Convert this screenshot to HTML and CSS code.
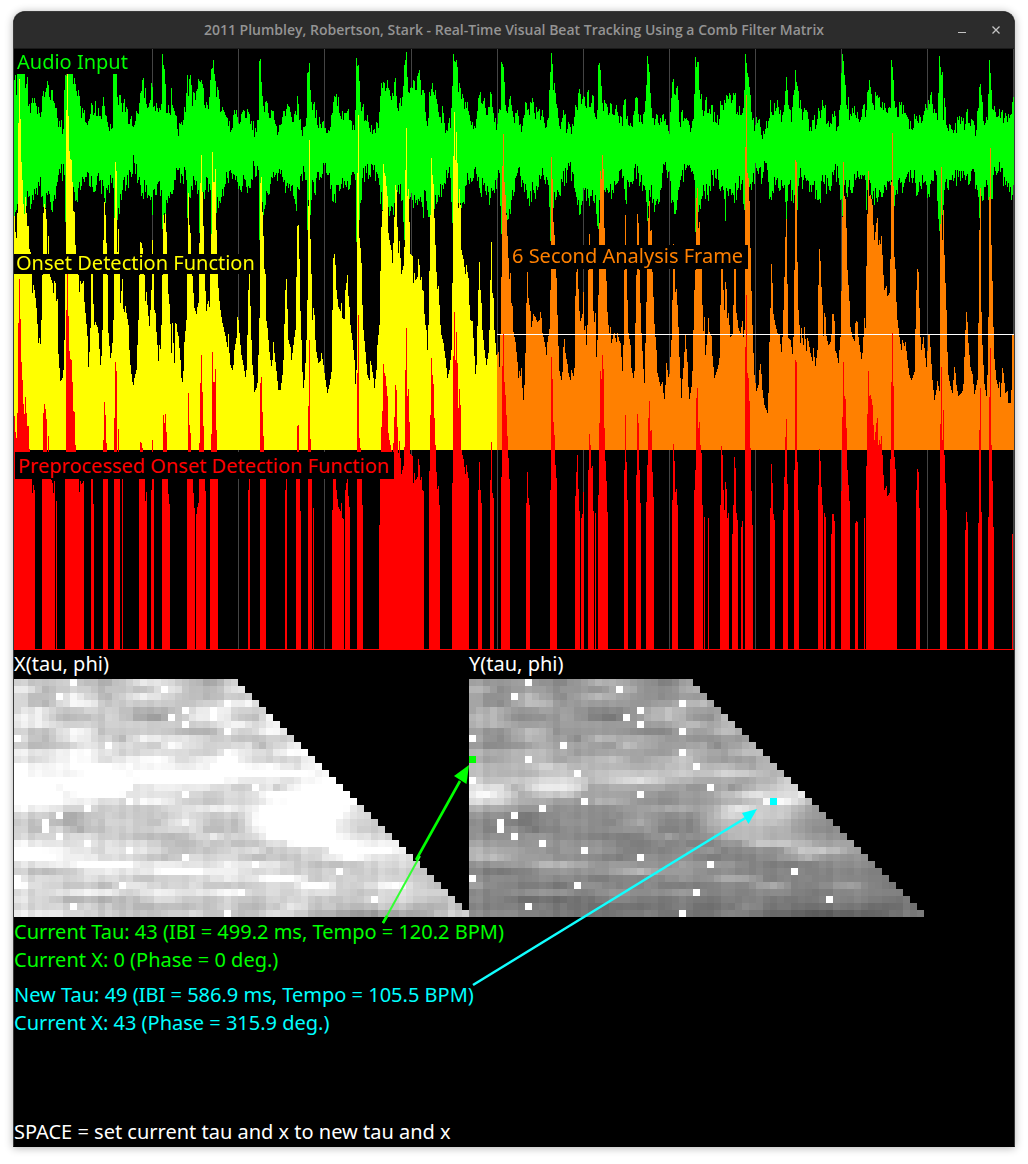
FILE: index.html
```html
<!DOCTYPE html>
<html lang="en">
<head>
<meta charset="utf-8">
<meta name="viewport" content="width=device-width, initial-scale=1">
<title>Real-Time Visual Beat Tracking Using a Comb Filter Matrix</title>
<link rel="stylesheet" href="styles.css">
</head>
<body>
<main class="window">
  <header class="titlebar">
    <h1 class="title">2011 Plumbley, Robertson, Stark - Real-Time Visual Beat Tracking Using a Comb Filter Matrix</h1>
    <div class="controls">
      <button class="control" type="button" aria-label="Minimize"><svg width="12" height="12" viewBox="0 0 12 12"><path d="M2 8.5h8" stroke="currentColor"/></svg></button>
      <button class="control" type="button" aria-label="Close"><svg width="12" height="12" viewBox="0 0 12 12"><path d="M2.5 2.5l7 7M9.5 2.5l-7 7" stroke="currentColor" stroke-width="1.3"/></svg></button>
    </div>
  </header>
  <section class="signals">
    <canvas class="plot" id="signals" width="1000" height="601"></canvas>
    <p class="tag tag-audio">Audio Input</p>
    <p class="tag tag-onset">Onset Detection Function</p>
    <p class="tag tag-frame">6 Second Analysis Frame</p>
    <p class="tag tag-pre">Preprocessed Onset Detection Function</p>
  </section>
  <section class="analysis">
    <div class="matrices">
      <figure class="matrix">
        <figcaption class="caption">X(tau, phi)</figcaption>
        <canvas class="plot" id="matrix-x" width="455" height="238"></canvas>
      </figure>
      <figure class="matrix">
        <figcaption class="caption">Y(tau, phi)</figcaption>
        <canvas class="plot" id="matrix-y" width="545" height="238"></canvas>
      </figure>
    </div>
    <div class="readouts">
      <div class="readout current">
        <p>Current Tau: 43 (IBI = 499.2 ms, Tempo = 120.2 BPM)</p>
        <p>Current X: 0 (Phase = 0 deg.)</p>
      </div>
      <div class="readout new">
        <p>New Tau: 49 (IBI = 586.9 ms, Tempo = 105.5 BPM)</p>
        <p>Current X: 43 (Phase = 315.9 deg.)</p>
      </div>
      <p class="hint">SPACE = set current tau and x to new tau and x</p>
    </div>
    <svg class="arrows" viewBox="0 0 1000 400" aria-hidden="true">
      <path d="M369 273L406 206" stroke="#3f3" stroke-width="2"/>
      <path d="M369 273l4-7M402 210L446 131" stroke="#0f0" stroke-width="2.6"/>
      <path d="M455 115L452.500 134L440 126Z" fill="#0f0"/>
      <path d="M459 335L733 167" stroke="#1ff" stroke-width="2.6"/>
      <path d="M743 159L734.500 174L728 163Z" fill="#0ff"/>
    </svg>
  </section>
</main>
<script src="plots.js"></script>
</body>
</html>
```

FILE: styles.css
```css
* { box-sizing: border-box; }

body {
  margin: 0;
  padding: 11px 13px 16px;
  background: #fff;
  color: #fff;
  font-family: "Noto Sans", "Open Sans", sans-serif;
  font-size: 20px;
  line-height: 28px;
}

p, h1, figure { margin: 0; }

.window {
  border: 1px solid #3a3a3a;
  border-bottom-color: #000;
  border-radius: 12px 12px 0 0;
  background: #000;
  box-shadow: 0 1px 8px rgba(0, 0, 0, 0.3);
}

.titlebar {
  position: relative;
  display: flex;
  align-items: center;
  justify-content: center;
  height: 37px;
  border-bottom: 1px solid #1a1a1a;
  border-radius: 11px 11px 0 0;
  background: #2c2c2c;
  color: #949494;
}

.title {
  font-family: "Open Sans", "Noto Sans", sans-serif;
  font-size: 14px;
  font-weight: 600;
  line-height: 20px;
  white-space: nowrap;
}

.controls {
  position: absolute;
  right: 6px;
  display: flex;
  gap: 10px;
}

.control {
  display: flex;
  align-items: center;
  justify-content: center;
  width: 24px;
  height: 24px;
  padding: 0;
  border: 0;
  background: none;
  color: #c4c4c4;
}

.signals { position: relative; }

.plot {
  display: block;
  width: 100%;
  image-rendering: pixelated;
}

.tag {
  position: absolute;
  background: #000;
  white-space: nowrap;
}

.tag-audio { left: 0; top: 0; padding: 0 2px 0 3px; line-height: 25px; color: #0f0; }
.tag-onset { left: 0; top: 205px; padding: 0 0 2px 2px; line-height: 18px; color: #ff0; }
.tag-frame { left: 495px; top: 196px; padding: 0 5px 2px 3px; line-height: 22px; color: #ff8000; }
.tag-pre { left: 1px; top: 403px; padding: 0 5px 0 3px; line-height: 27px; color: #f00; }

.analysis { position: relative; }

.matrices {
  display: grid;
  grid-template-columns: 455fr 545fr;
}

.matrix { min-width: 0; }
.caption { height: 29px; }

.readouts {
  display: flex;
  flex-direction: column;
  gap: 7px;
  padding-top: 1px;
}

.current { color: #0f0; }
.new { color: #0ff; }
.hint { padding-top: 74px; }

.arrows {
  position: absolute;
  left: 0;
  top: 0;
  width: 100%;
}
```

FILE: plots.js
```js
// Signal samples are "column:row" pairs in window pixels; columns between two pairs are interpolated.
const LEFT = 14, TOP = 49, COLS = 1000;

const ONSET = `14:216 15:232 16:238 17:213 18:123 19:79 20:119 21:162 22:180 23:204 24:214 25:197 26:213 27:226 28:226 29:249 30:252 31:270 32:293 33:285 34:290 35:298 36:308 37:324 38:343 39:338 40:344 41:320 42:275 43:213 44:204 45:209 46:219 47:254 48:236 49:254 50:277 52:283 53:293 54:281 55:283 56:301 57:299 58:354 60:381 62:378 63:370 64:340 65:270 66:110 67:74 68:116 69:151 70:159 71:160 72:182 73:211 74:212 75:245 76:254 78:275 79:292 80:281 81:284 83:281 84:302 86:324 87:336 88:367 89:352 90:328 91:274 92:274 93:304 94:325 95:322 97:327 98:333 100:365 101:356 102:330 103:240 104:202 105:215 106:243 107:275 108:333 110:358 111:353 112:343 113:320 114:218 115:162 116:171 117:252 118:229 119:254 120:303 122:279 123:309 124:312 125:306 126:313 128:325 129:350 130:365 132:382 133:385 134:378 136:370 138:320 139:275 140:242 141:243 142:248 144:275 145:301 146:292 147:305 149:326 150:310 151:290 152:240 153:272 154:310 155:313 156:332 157:345 158:361 159:345 160:349 161:325 162:275 163:215 164:223 165:214 166:232 167:262 168:294 169:304 170:324 171:353 172:323 174:363 175:323 176:324 177:332 178:336 180:360 181:378 182:382 183:371 184:342 186:320 187:260 188:193 189:225 190:233 191:258 193:293 194:308 196:314 197:307 198:303 199:243 200:183 201:155 202:192 203:226 204:255 205:291 206:311 207:304 208:301 209:307 210:270 211:234 212:152 213:182 214:182 215:169 216:230 217:260 218:288 219:301 220:310 222:323 225:336 227:347 228:334 229:353 230:365 232:370 233:365 234:350 236:338 237:317 238:320 240:345 241:355 243:365 245:377 246:370 247:335 248:290 249:270 250:306 251:340 252:365 253:375 254:392 256:388 257:383 258:355 259:318 260:183 261:177 262:212 263:236 264:269 265:274 266:321 267:328 269:352 270:360 271:366 272:360 273:342 274:353 276:371 278:390 280:390 282:375 283:360 284:324 285:290 286:279 287:309 288:340 290:347 291:360 293:345 294:337 295:330 296:277 297:226 298:225 299:259 300:311 301:340 302:372 303:388 304:380 305:363 306:340 307:300 308:206 309:140 310:239 311:274 312:320 313:308 314:315 315:340 316:352 318:363 320:361 321:353 323:365 325:380 327:393 329:385 331:372 332:310 333:258 334:254 335:265 336:290 338:307 340:311 341:303 342:318 344:319 345:290 346:283 347:275 348:296 349:307 350:325 352:340 354:360 355:384 356:370 357:173 358:115 359:238 360:248 361:263 362:305 363:330 365:352 367:375 369:380 370:361 371:365 373:378 374:388 376:370 377:345 378:335 379:325 380:271 381:227 382:211 383:164 384:173 385:176 386:186 387:196 388:233 389:240 391:250 392:263 393:243 394:217 395:185 396:190 397:227 398:253 399:241 400:258 401:274 403:266 404:247 405:170 406:128 407:196 408:189 409:222 410:254 412:256 413:283 414:273 415:280 417:277 418:259 419:265 420:280 421:277 422:290 423:291 424:314 425:325 426:330 427:350 428:325 429:271 430:215 431:158 432:175 433:184 434:218 435:245 436:272 437:289 438:286 439:305 440:325 441:335 443:343 445:358 447:378 449:370 451:350 452:283 453:156 454:112 455:160 456:132 457:163 458:208 459:189 460:205 461:250 463:259 465:274 466:265 467:272 468:278 469:305 470:320 472:321 473:338 475:374 476:365 477:326 478:290 479:262 480:290 481:303 482:330 484:350 486:365 488:353 489:330 490:280 491:242 492:293 493:298 494:330 496:355 498:352 499:367 500:335 501:277 502:166 503:134 504:182 505:195 506:215 507:236 508:258 509:279 510:273 511:303 512:306 513:332 515:342 517:362 518:378 519:371 520:376 521:368 522:388 523:400 524:385 525:353 526:303 527:272 528:298 530:311 531:327 533:314 535:317 537:322 539:320 540:312 541:318 542:333 543:337 545:347 546:355 547:342 549:329 550:290 551:157 552:179 553:222 554:235 555:265 556:278 557:315 558:346 559:371 561:380 562:372 563:347 564:339 565:353 567:364 568:373 570:380 571:370 573:376 574:368 575:296 576:272 577:255 578:289 579:311 580:321 582:314 583:292 584:330 585:326 586:345 587:325 588:270 589:234 590:245 591:268 592:266 593:311 594:322 595:313 596:357 597:340 598:295 599:223 600:171 601:179 602:155 603:169 604:228 605:261 606:281 607:312 608:325 609:333 610:327 611:343 613:335 614:333 616:342 617:333 619:341 620:343 622:371 623:345 624:270 625:215 626:262 627:300 628:333 630:345 631:368 633:378 634:371 636:275 637:214 638:223 639:270 640:303 641:333 643:369 644:383 645:343 646:302 647:265 648:218 649:201 650:231 651:230 652:272 653:297 654:324 656:350 657:373 660:386 662:382 663:393 664:399 665:385 666:363 668:377 669:374 671:340 672:300 673:244 674:261 675:292 676:289 677:305 678:327 679:357 681:398 682:379 683:368 685:335 687:362 688:387 689:399 691:387 692:371 693:330 694:290 695:270 696:198 697:188 698:228 699:222 700:245 701:253 702:305 703:331 704:317 705:355 707:335 708:318 709:332 711:336 712:356 714:378 716:372 718:365 719:358 720:305 721:246 722:255 723:290 724:310 725:282 726:289 727:318 728:313 730:337 732:334 733:305 734:257 735:268 736:313 737:320 738:328 740:333 741:327 742:321 743:337 744:330 745:147 746:95 747:173 748:178 749:201 750:248 751:291 752:325 753:353 754:375 756:391 758:385 759:370 760:364 761:374 762:390 764:405 766:410 767:413 768:393 769:342 770:308 771:264 772:283 773:314 775:325 777:333 779:335 781:352 782:337 783:310 784:277 785:237 786:219 787:284 788:338 790:340 792:354 793:337 794:270 795:160 796:162 797:262 798:310 799:325 800:343 801:328 802:338 803:345 804:327 806:351 807:338 808:341 810:353 812:361 813:348 815:366 817:350 818:285 819:249 820:261 821:287 822:305 823:336 824:313 825:317 826:336 828:345 830:342 831:334 832:314 833:314 834:321 835:351 836:353 838:363 840:337 841:291 842:217 843:162 844:196 845:199 846:228 847:270 848:285 849:301 850:327 852:337 854:341 855:323 856:321 857:322 858:337 860:352 861:359 862:353 863:337 864:318 865:328 866:266 867:214 868:171 869:196 870:195 871:199 872:205 873:225 874:240 876:223 877:218 878:245 879:240 880:244 881:236 882:255 883:275 884:290 885:288 886:286 887:296 889:293 890:259 891:182 892:133 893:186 894:257 895:269 896:302 897:320 898:328 899:337 901:350 902:340 904:346 905:342 907:360 909:375 911:380 913:375 914:372 915:329 916:290 917:269 918:272 919:308 920:337 921:350 923:337 925:358 926:367 928:334 929:335 930:347 932:380 934:400 936:390 937:381 939:391 940:224 941:167 942:240 943:210 944:255 945:283 946:310 947:352 948:375 950:386 952:393 954:367 955:373 956:385 958:396 960:394 962:391 963:384 965:330 966:312 967:322 968:343 970:367 972:374 974:394 976:385 977:380 978:323 979:230 980:188 981:312 982:345 984:384 986:396 987:375 988:317 989:197 990:148 991:245 992:281 993:327 994:359 996:380 998:388 999:382 1000:397 1002:368 1003:373 1005:393 1007:391 1008:403 1010:403 1011:390 1012:334 1013:334`;

const AUDIO_HIGH = `14:80 15:75 16:95 17:70 19:60 24:74 25:88 26:84 27:77 28:106 31:103 32:98 33:103 34:98 36:106 38:107 39:113 40:117 41:112 42:96 43:91 44:97 45:92 46:88 47:81 48:85 49:97 50:100 51:90 52:90 53:101 55:108 56:108 57:118 58:127 60:127 63:129 64:90 65:75 72:70 73:84 75:84 76:91 77:96 79:96 80:106 81:118 83:113 85:122 87:125 89:119 90:114 92:105 93:115 95:101 97:116 100:116 102:106 103:97 105:115 107:122 110:124 112:128 113:72 116:74 118:105 119:95 121:103 123:103 125:112 127:109 129:124 131:116 133:127 135:121 137:113 139:103 140:93 142:80 143:78 144:98 145:88 147:108 149:103 151:83 153:107 156:103 158:112 160:110 161:104 162:54 163:65 165:84 166:113 168:105 170:115 171:88 173:108 175:115 177:129 180:124 183:120 185:112 186:93 187:75 188:96 190:75 192:106 194:93 195:100 197:89 199:81 201:80 203:88 205:108 207:105 209:97 210:80 212:68 213:60 214:74 216:97 218:90 220:112 223:110 226:117 229:121 231:130 234:110 237:117 239:124 241:114 243:110 245:118 247:109 249:114 252:130 255:128 258:120 259:61 260:59 261:82 263:106 266:101 268:113 270:118 272:111 275:124 278:132 281:124 284:111 288:106 290:112 292:122 294:114 296:115 297:96 299:120 301:130 304:127 306:118 307:73 309:63 310:90 312:110 314:102 317:125 319:117 322:122 325:128 328:130 331:115 333:102 335:97 338:97 340:116 344:113 347:111 350:120 354:130 355:110 356:58 358:65 360:102 362:107 365:120 368:122 371:125 374:129 376:122 378:128 380:96 382:88 384:83 386:88 387:80 389:90 391:100 393:96 395:78 397:108 399:103 401:106 403:86 404:65 406:52 407:77 409:93 411:87 413:80 415:90 417:76 419:70 421:95 423:90 425:112 427:126 429:92 431:89 433:92 435:90 437:104 440:117 443:113 446:130 448:123 450:128 452:86 453:54 455:62 457:67 458:92 460:88 463:98 466:108 469:115 472:122 475:128 478:98 480:92 482:104 484:98 487:115 490:92 492:107 495:118 497:124 499:109 500:110 501:62 503:67 505:105 508:107 510:96 511:105 513:117 516:113 519:125 522:126 525:102 528:109 531:103 534:113 536:107 540:120 543:117 546:127 548:118 549:90 551:53 552:64 553:90 555:93 558:118 561:122 564:115 567:129 570:127 573:126 575:105 577:110 579:89 581:104 583:96 585:106 588:90 590:107 593:96 595:117 597:110 598:65 600:70 602:103 605:103 608:115 611:104 614:115 616:105 619:123 622:126 624:100 627:116 630:123 633:115 636:97 638:114 641:122 644:112 646:85 647:56 649:72 651:108 653:118 656:114 660:118 664:121 667:125 669:134 671:98 673:79 675:95 677:86 679:122 682:110 684:118 687:120 690:132 693:119 695:57 698:62 699:90 701:94 703:116 705:100 708:113 711:105 715:122 718:125 720:101 723:110 726:95 729:93 731:103 734:95 737:112 740:115 743:108 744:90 745:54 747:73 750:95 752:120 755:125 758:120 760:127 764:134 767:128 770:100 772:115 776:108 778:107 781:122 784:105 786:77 788:105 791:122 793:95 795:70 797:86 799:108 803:112 806:110 810:127 813:120 816:125 818:108 821:110 824:108 827:123 830:123 833:117 837:127 840:105 842:54 844:75 846:105 848:97 849:120 852:108 856:118 860:120 863:105 866:110 868:90 870:87 873:105 877:95 880:107 883:110 887:113 890:108 891:60 893:80 895:108 898:117 900:105 904:113 908:119 912:130 916:116 919:115 923:115 926:108 928:100 931:92 933:113 937:120 939:56 941:75 942:72 943:120 944:98 946:125 950:125 954:130 958:120 962:121 965:124 966:112 970:126 974:125 976:130 978:108 980:84 982:102 984:125 987:120 989:60 991:90 993:110 996:117 1000:118 1004:118 1007:122 1010:115 1012:102 1013:101`;

const AUDIO_LOW = `14:216 16:210 20:190 24:215 28:197 33:200 36:188 40:177 43:207 47:195 51:210 54:195 57:182 60:173 64:175 65:222 66:200 70:195 76:200 80:190 84:182 88:173 92:187 96:185 100:180 104:198 108:185 112:178 114:218 118:208 122:190 126:185 130:172 134:163 138:180 142:193 146:185 150:200 152:215 153:190 158:182 161:190 162:229 165:215 166:200 170:192 174:180 178:170 182:176 186:180 187:218 190:198 194:180 198:190 199:233 200:208 207:178 210:190 211:235 212:190 218:208 221:197 225:184 230:170 235:180 240:190 245:180 250:188 254:166 258:170 259:240 260:190 264:209 268:195 272:178 278:173 283:182 288:188 292:185 295:204 299:190 303:166 306:180 307:230 308:200 310:215 312:180 315:195 318:172 324:165 329:173 333:202 337:185 342:178 348:190 352:172 355:180 356:242 357:190 359:220 362:178 366:173 372:165 378:178 382:210 388:207 393:215 398:185 402:200 404:240 405:200 412:200 416:200 420:197 423:218 424:190 430:215 434:209 438:195 442:185 446:170 450:178 452:223 453:200 461:208 466:185 470:178 475:167 480:193 484:183 490:198 495:180 499:173 501:234 502:200 505:200 508:219 512:190 517:173 522:180 528:198 533:190 538:187 543:175 548:185 550:241 551:215 557:190 562:182 567:170 572:172 577:205 580:214 584:190 590:196 595:195 598:229 599:200 607:190 612:190 617:183 622:178 625:200 628:182 634:168 640:182 645:190 647:221 649:190 655:205 660:190 664:165 668:172 672:200 676:210 680:180 685:170 690:168 694:180 695:232 699:205 703:185 707:195 712:175 718:180 723:190 725:221 726:188 733:195 738:188 742:180 744:210 748:190 752:182 756:168 762:178 766:163 770:197 775:185 780:190 784:185 786:220 788:185 794:195 797:210 799:178 807:180 812:185 818:200 823:182 829:190 834:170 838:178 842:216 844:185 850:190 855:180 860:175 865:180 866:210 868:190 876:198 882:197 886:190 891:180 894:206 896:190 903:187 908:172 913:178 918:192 922:175 927:198 931:180 936:175 939:231 942:215 944:190 952:175 958:177 964:175 968:185 974:172 977:190 979:218 980:195 987:185 990:215 993:175 1000:172 1005:185 1012:195 1013:190`;

// Column ranges in which the onset function rises above its adaptive threshold.
const PEAKS = `14-35 42-55 56-57 65-84 91-94 103-108 114-120 122-123 139-147 151-154 162-170 187-195 196-206 210-218 248-250 260-266 285-287 296-301 308-312 313-314 332-344 345-350 357-363 379-424 429-440 452-469 478-482 490-494 501-510 526-530 550-557 575-580 581-584 588-594 595-596 598-608 624-628 636-641 646-654 672-678 694-703 704-705 708-709 720-729 732-738 741-743 745-753 770-775 783-788 794-799 818-823 824-826 831-835 841-850 855-858 864-865 866-897 916-920 940-947 965-968 978-982 988-994 1012-1013`;

// One line per tau: "phi:gray" pairs of the Y matrix.
const ROWS = `0:160 4:150 7:160 10:145 13:135 16:160 18:180 21:170 24:150 28:130 31:160
0:180 2:170 4:140 6:155 8:165 12:140 15:150 18:150 21:175 23:170 25:145 29:150 32:180
0:165 3:145 5:150 8:190 10:165 13:140 16:170 18:185 21:165 24:150 28:145 33:160
0:165 4:140 8:190 10:185 13:150 17:155 21:155 24:150 27:160 30:175 33:190 34:175
0:165 3:185 6:155 9:155 13:160 17:135 21:135 23:150 26:180 28:195 31:165 35:160
0:180 3:185 6:145 10:145 14:160 17:130 20:120 22:140 25:175 28:195 31:160 34:145 36:180
0:175 3:185 6:165 9:160 12:150 16:160 20:155 23:155 26:160 30:180 32:185 34:165 37:180
0:160 4:145 8:190 10:180 12:145 16:155 20:155 24:140 27:135 30:165 33:160 36:190 38:175
0:170 4:140 6:165 8:185 11:165 14:150 15:140 18:185 21:170 24:175 27:160 31:150 35:150 39:155
0:155 3:140 6:150 9:170 13:165 17:160 20:155 22:190 26:165 30:160 33:170 35:140 40:180
0:180 4:170 8:190 11:180 15:155 19:165 24:165 27:155 31:185 36:160 39:190 41:185
0:170 3:165 6:180 8:190 13:165 17:180 20:195 23:165 27:180 30:200 33:170 36:155 40:160 42:180
0:190 4:180 8:190 11:210 14:185 17:180 20:185 24:175 28:190 31:190 35:185 40:165 43:190
0:190 5:180 9:185 12:200 16:185 20:200 25:200 29:200 33:195 37:210 41:190 44:180
0:205 3:195 8:205 12:220 15:210 17:185 20:205 24:225 27:200 30:180 34:170 39:165 42:180 45:205
0:225 4:225 6:180 9:225 12:235 15:220 17:165 22:175 27:170 31:150 34:155 36:170 37:150 40:180 43:200 46:215
0:235 2:250 5:215 7:175 10:200 14:200 16:165 20:165 25:155 29:150 33:160 37:190 40:225 43:215 46:220 47:235
0:220 4:215 6:185 9:170 13:160 16:150 18:180 21:170 24:150 29:145 34:160 38:180 41:200 42:250 44:250 46:225 48:195
0:175 4:170 8:150 13:145 17:140 20:145 24:160 28:170 32:160 35:185 38:230 41:205 45:200 47:180 49:160
0:150 4:145 8:120 12:140 17:140 21:140 24:160 27:145 31:140 34:175 37:215 40:200 44:205 47:170 50:155
0:140 4:135 8:120 10:135 15:145 20:135 24:170 27:140 31:130 34:175 38:190 43:195 47:160 51:145
0:145 3:130 6:150 9:120 13:140 19:140 23:150 25:155 28:130 31:130 34:165 38:185 44:180 48:150 52:140
0:145 4:145 8:150 13:140 17:130 22:125 25:140 28:160 30:140 34:150 38:185 42:180 46:170 50:155 53:140
0:165 5:155 10:150 15:145 18:150 21:130 24:125 27:140 31:130 35:140 38:150 41:200 44:200 48:180 51:160 54:165
0:180 3:175 7:160 11:145 15:150 18:155 22:130 26:135 30:140 34:150 36:130 40:140 44:150 47:200 50:200 53:175 55:155
0:180 3:190 6:165 10:155 13:145 17:140 21:125 25:145 30:145 35:125 40:130 45:155 48:180 51:150 56:145
0:145 5:155 8:160 11:185 14:175 18:150 22:155 26:150 31:155 36:150 40:130 45:125 50:140 57:140
0:135 4:120 7:130 12:150 15:145 19:150 24:185 26:165 30:155 35:140 40:130 45:135 50:135 58:130
0:140 4:140 8:135 13:140 18:125 23:135 28:145 33:145 37:170 39:165 42:130 48:135 55:135 59:130
0:160 3:140 8:125 13:120 17:145 21:130 25:140 30:125 34:130 39:135 43:170 46:130 50:140 54:160 56:140 60:125
0:135 4:135 8:145 12:145 16:130 20:150 24:140 30:155 34:130 39:130 43:140 48:125 54:135 61:135
0:140 4:130 8:110 13:110 17:115 20:135 26:125 31:125 35:120 40:130 45:120 50:130 56:130 62:120
0:130 5:130 9:125 14:115 18:110 23:115 29:125 34:110 37:120 39:140 42:120 47:115 53:120 58:110 63:120
0:140 5:140 10:125 15:115 20:115 25:130 30:115 33:115 38:130 43:105 50:95 57:100 60:115 64:130`;

// Candidate phase for each tau.
const CANDIDATES = [8, 21, 6, 30, 24, 22, 24, 30, 0, 13, 30, 8, 32, 15, 0, 34, 24, 16, 10, 6, 4, 4, 6, 10, 16, 24, 34, 46, 0, 15, 32, 51, 8, 30];

function noise(x) {
  const n = Math.sin(x * 12.9898) * 43758.5453;
  return (n - Math.floor(n)) * 2 - 1;
}

function expand(text, from, count, jitter) {
  const pts = text.split(" ").map(p => p.split(":").map(Number));
  const out = [];
  let k = 0;
  for (let i = 0; i < count; i++) {
    const x = from + i;
    while (k < pts.length - 2 && pts[k + 1][0] <= x) k++;
    const [x0, y0] = pts[k], [x1, y1] = pts[k + 1];
    let y = y0 + (y1 - y0) * (x - x0) / (x1 - x0);
    if (x !== x0) y += noise(x) * jitter;
    out.push(Math.round(y));
  }
  return out;
}

function drawSignals() {
  const g = document.getElementById("signals").getContext("2d");
  const bar = (i, y0, y1, color) => {
    g.fillStyle = color;
    g.fillRect(i, y0 - TOP, 1, y1 - y0);
  };
  g.fillStyle = "#000";
  g.fillRect(0, 0, COLS, 601);
  for (const x of [66, 152, 238, 324, 411, 497, 583, 669, 755, 841, 927, 1013]) bar(x - LEFT, 49, 650, "#444");

  const onset = expand(ONSET, LEFT, COLS, 0);
  const high = expand(AUDIO_HIGH, LEFT, COLS, 9);
  const low = expand(AUDIO_LOW, LEFT, COLS, 11);
  for (let i = 0; i < COLS; i++) {
    bar(i, high[i], low[i], "#0f0");
    bar(i, onset[i], 450, i + LEFT < 497 ? "#ff0" : "#ff8000");
  }
  g.fillStyle = "#fff";
  g.fillRect(497 - LEFT, 334 - TOP, COLS, 1);
  for (const range of PEAKS.split(" ")) {
    const [a, b] = range.split("-").map(Number);
    for (let x = a; x < b; x++) bar(x - LEFT, onset[x - LEFT] + 200, 650, "#f00");
  }
  g.fillStyle = "#f00";
  g.fillRect(0, 600, COLS, 1);
}

function drawMatrix(id, gain, markers) {
  const g = document.getElementById(id).getContext("2d");
  const cell = (c, r, color) => {
    g.fillStyle = color;
    g.fillRect(c * 7, r * 7, 7, 7);
  };
  ROWS.split("\n").forEach((line, r) => {
    const values = expand(line, 0, 32 + r, 7);
    values.forEach((v, c) => {
      const n = Math.min(255, Math.round(v * gain(r)));
      cell(c, r, `rgb(${n},${n},${n})`);
    });
    cell(CANDIDATES[r], r, "#fff");
  });
  for (const [c, r, color] of markers) cell(c, r, color);
}

drawSignals();
drawMatrix("matrix-x", r => 1.3 + 0.38 * (r / 33) ** 2, []);
drawMatrix("matrix-y", () => 1, [[0, 11, "#0f0"], [43, 17, "#0ff"]]);
```
